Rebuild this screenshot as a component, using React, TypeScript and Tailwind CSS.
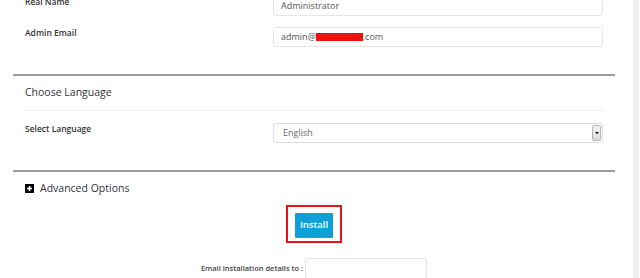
export default function App() {
  return (
    <div
      className="w-[640px] h-[278px] overflow-hidden bg-white flex text-[#333]"
      style={{ fontFamily: '"Open Sans", "Liberation Sans", sans-serif' }}
    >
      <div className="w-[633px] shrink-0">
        <div className="pl-[13px] w-[615px] -mt-[4px]">
          {/* Admin details */}
          <div className="px-[12px] flex flex-col gap-[11px]">
            <div className="flex">
              <div className="w-[248px] text-[8.5px] leading-[12px] font-semibold">Real Name</div>
              <div className="w-[330px] h-[20px] border border-[#e6e6e6] rounded-[3px] pl-[7px] flex items-center text-[9px] text-[#555]">
                Administrator
              </div>
            </div>
            <div className="flex">
              <div className="w-[248px] text-[8.5px] leading-[12px] font-semibold">Admin Email</div>
              <div className="w-[330px] h-[20px] border border-[#e6e6e6] rounded-[3px] pl-[7px] flex items-center text-[9px] text-[#555]">
                admin@<span className="inline-block w-[47px] h-[8px] bg-[#ee1111]" />.com
              </div>
            </div>
          </div>

          <div className="mt-[27px] h-[2px] bg-[#9c9c9c]" />

          {/* Choose Language */}
          <div className="px-[12px]">
            <div className="pt-[8px] text-[10.5px] leading-[16px]">Choose Language</div>
            <div className="mt-[10px] h-px bg-[#efefef]" />
            <div className="flex mt-[12px]">
              <div className="w-[248px] text-[8.5px] leading-[12px] font-semibold">Select Language</div>
              <div className="w-[330px] h-[20px] border border-[#dcdcdc] rounded-[3px] pl-[9px] flex items-center text-[9px] text-[#666] relative">
                English
                <div className="absolute right-[1px] top-[1px] bottom-[1px] w-[9px] border border-[#b5b5b5] rounded-[2px] bg-gradient-to-b from-[#f4f4f4] to-[#dadada] flex items-center justify-center">
                  <div className="w-0 h-0 border-l-[2px] border-r-[2px] border-t-[2px] border-l-transparent border-r-transparent border-t-black" />
                </div>
              </div>
            </div>
          </div>

          <div className="mt-[27px] h-[2px] bg-[#9c9c9c]" />

          {/* Advanced options */}
          <div className="px-[12px] pt-[8px] flex items-center gap-[6px] text-[10.5px] leading-[16px]">
            <span className="w-[9px] h-[9px] bg-black flex items-center justify-center">
              <svg width="7" height="7" viewBox="0 0 7 7">
                <path d="M3.5 1v5M1 3.5h5" stroke="white" strokeWidth="1.6" />
              </svg>
            </span>
            Advanced Options
          </div>

          <div className="flex justify-center mt-[9px]">
            <div className="border-2 border-[#e8141c] px-[7px] py-[3px]">
              <button className="w-[38px] h-[25px] bg-[#0ea0d6] text-white text-[9.5px] font-semibold rounded-[1px]">
                Install
              </button>
            </div>
          </div>

          <div className="flex justify-center items-center mt-[15px] gap-[2px]">
            <span className="text-[7.5px] font-semibold text-[#444]">Email installation details to :</span>
            <div className="w-[122px] h-[21px] border border-[#e3e3e3] rounded-[3px]" />
          </div>
        </div>
      </div>
      <div className="w-[6px] shrink-0 bg-[#efefef]" />
    </div>
  );
}
